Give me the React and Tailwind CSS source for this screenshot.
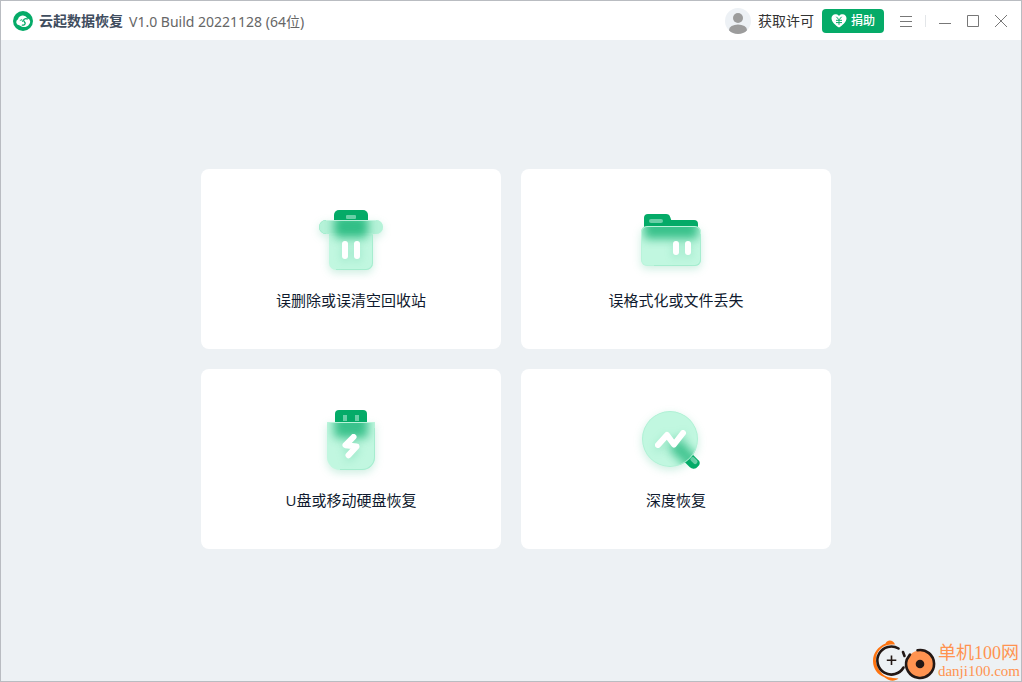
import React from 'react'

function LogoIcon() {
  return (
    <svg className="h-5 w-5 flex-shrink-0" viewBox="0 0 20 20" aria-hidden="true">
      <circle cx="10" cy="10" r="10" fill="#05ab68" />
      <path
        d="M6.200 14.200A3.100 3.100 0 0 1 5 8.300 5 5 0 0 1 14.300 7.200a3.900 3.900 0 0 1 1.200 7c-1.500 1.700-4.600 2.400-7 1.200-1-.4-1.700-.8-2.300-1.200z"
        fill="#fff"
      />
      <path
        d="M14.800 8.200c-2-1-4-.4-4.200 1-.2 1.200 1.400 1.700 1.600 3 .2 1.500-1.700 2.300-3.400 1.900"
        fill="none"
        stroke="#05ab68"
        strokeWidth="1.300"
      />
      <path d="M6.800 9.600 9 8.600l.6 2.400" fill="none" stroke="#05ab68" strokeWidth=".8" />
    </svg>
  )
}

function AvatarIcon() {
  return (
    <svg className="h-[26px] w-[26px] flex-shrink-0" viewBox="0 0 26 26" aria-hidden="true">
      <clipPath id="avatar-clip">
        <circle cx="13" cy="13" r="13" />
      </clipPath>
      <g clipPath="url(#avatar-clip)">
        <rect width="26" height="26" fill="#edf1f5" />
        <circle cx="13" cy="10" r="5" fill="#9c9c9c" />
        <ellipse cx="13" cy="22" rx="9" ry="5.500" fill="#9c9c9c" />
      </g>
    </svg>
  )
}

function HeartYenIcon() {
  return (
    <svg className="h-[14px] w-4" viewBox="0 0 16 14" aria-hidden="true">
      <path
        d="M8 1.900C6.900.6 5.600.3 4.400.3 2.200.3.500 2 .500 4.300.500 8 4.500 11.400 8 13.600c3.500-2.200 7.500-5.600 7.500-9.300 0-2.300-1.700-4-3.900-4-1.200 0-2.500.3-3.600 1.600z"
        fill="#fff"
      />
      <path d="m5.400 2.800 2.600 3 2.600-3M8 5.800v5M5 6.300h6M5 8.600h6" fill="none" stroke="#05ab68" strokeWidth="1" />
    </svg>
  )
}

// Soft drop shadow below every glass icon
const SHADOW = 'drop-shadow(0 3px 4px rgba(5, 171, 104, 0.2))'

function TrashIcon() {
  const body = 'M20 20h50a7 7 0 0 1 0 14h-3v29a7 7 0 0 1-7 7H30a7 7 0 0 1-7-7V34h-3a7 7 0 0 1 0-14z'
  return (
    <svg className="h-20 w-[90px]" viewBox="0 0 90 80" aria-hidden="true">
      <defs>
        <clipPath id="trash-clip">
          <path d={body} />
        </clipPath>
        <filter id="trash-blur" x="-60%" y="-60%" width="220%" height="220%">
          <feGaussianBlur stdDeviation="5" />
        </filter>
      </defs>
      <path d="M28 22v-7a5 5 0 0 1 5-5h24a5 5 0 0 1 5 5v7z" fill="#05ab68" />
      <rect x="40" y="15" width="10" height="4" rx="1" fill="#6bd0a8" />
      <path d={body} fill="#c1f7e0" style={{ filter: SHADOW }} />
      <g clipPath="url(#trash-clip)">
        <path d="M13 20h64v14H13z" fill="#b5f2d8" />
        <path d="M23 33h44v3H23z" fill="#bdf5dd" />
        <rect x="28" y="15" width="34" height="23" rx="5" fill="#05ab68" opacity=".72" filter="url(#trash-blur)" />
        <path d="M20 20.500h50" stroke="#c9f6e3" opacity=".85" />
        <path d="M67 35v28a7 7 0 0 1-7 7H30" fill="none" stroke="#a6edcf" strokeWidth="2" />
        <path d="M20 20a7 7 0 0 0 0 14" fill="none" stroke="#98e8c7" strokeWidth="1" />
      </g>
      <g style={{ filter: SHADOW }} fill="#fff">
        <rect x="36" y="41" width="6" height="18" rx="3" />
        <rect x="48" y="41" width="6" height="18" rx="3" />
      </g>
    </svg>
  )
}

function FolderIcon() {
  return (
    <svg className="h-20 w-[100px]" viewBox="0 0 100 80" aria-hidden="true">
      <defs>
        <clipPath id="folder-clip">
          <rect x="15" y="26" width="60" height="40" rx="6" />
        </clipPath>
        <filter id="folder-blur" x="-50%" y="-100%" width="200%" height="300%">
          <feGaussianBlur stdDeviation="5" />
        </filter>
      </defs>
      <path d="M18 30V18a4 4 0 0 1 4-4h18c2.500 0 3.600 1 4.200 3l1 3H68a4 4 0 0 1 4 4v6z" fill="#05ab68" />
      <rect x="23" y="19" width="14" height="4" rx="2" fill="#6bd0a8" />
      <rect x="15" y="26" width="60" height="40" rx="6" fill="#c1f7e0" style={{ filter: SHADOW }} />
      <g clipPath="url(#folder-clip)">
        <rect x="18" y="16" width="54" height="23" rx="4" fill="#05ab68" opacity=".7" filter="url(#folder-blur)" />
        <rect x="15.500" y="26.500" width="59" height="39" rx="5.500" fill="none" stroke="#b9f3da" />
        <path d="M75 34v26a6 6 0 0 1-6 6H28" fill="none" stroke="#a6edcf" strokeWidth="2" />
      </g>
      <g style={{ filter: SHADOW }} fill="#fff">
        <rect x="47" y="41" width="6" height="14" rx="3" />
        <rect x="59" y="41" width="6" height="14" rx="3" />
      </g>
    </svg>
  )
}

function UsbIcon() {
  const body = 'M22 22h46a1 1 0 0 1 1 1v34a13 13 0 0 1-13 13H34a13 13 0 0 1-13-13V23a1 1 0 0 1 1-1z'
  return (
    <svg className="h-20 w-[90px]" viewBox="0 0 90 80" aria-hidden="true">
      <defs>
        <clipPath id="usb-clip">
          <path d={body} />
        </clipPath>
        <filter id="usb-blur" x="-60%" y="-60%" width="220%" height="220%">
          <feGaussianBlur stdDeviation="5" />
        </filter>
      </defs>
      <path d="M29 24V14a4 4 0 0 1 4-4h24a4 4 0 0 1 4 4v10z" fill="#05ab68" />
      <path d="M37 15h4v6h-4zM49 15h4v6h-4z" fill="#6bd0a8" />
      <path d={body} fill="#c1f7e0" style={{ filter: SHADOW }} />
      <g clipPath="url(#usb-clip)">
        <rect x="28" y="14" width="34" height="24" rx="4" fill="#05ab68" opacity=".7" filter="url(#usb-blur)" />
        <path d="M21 22.500h48" stroke="#b9f3da" />
        <path d="M69 28v29a13 13 0 0 1-13 13H34" fill="none" stroke="#a6edcf" strokeWidth="2" />
      </g>
      <path
        d="M47.500 37 39.500 45.200 50.500 46.500 42.500 55.300"
        fill="none"
        stroke="#fff"
        strokeWidth="6"
        strokeLinecap="round"
        strokeLinejoin="round"
        style={{ filter: SHADOW }}
      />
    </svg>
  )
}

function DeepScanIcon() {
  return (
    <svg className="h-20 w-[100px]" viewBox="0 0 100 80" aria-hidden="true">
      <defs>
        <clipPath id="scan-clip">
          <circle cx="44" cy="39" r="28" />
        </clipPath>
        <filter id="scan-blur" x="-50%" y="-150%" width="200%" height="400%">
          <feGaussianBlur stdDeviation="5" />
        </filter>
      </defs>
      <g transform="rotate(45 66 61)">
        <path d="M58 56h11a4 4 0 0 1 5 5 5.500 5.500 0 0 1-5 6H58z" fill="#05ab68" />
        <rect x="63" y="57" width="8" height="4.500" rx="2" fill="#6bd0a8" />
      </g>
      <circle cx="44" cy="39" r="28" fill="#c1f7e0" style={{ filter: SHADOW }} />
      <g clipPath="url(#scan-clip)">
        <rect
          x="44"
          y="48"
          width="36"
          height="15"
          fill="#05ab68"
          opacity=".65"
          transform="rotate(45 60 55)"
          filter="url(#scan-blur)"
        />
        <circle cx="44" cy="39" r="27.500" fill="none" stroke="#b1f0d5" />
      </g>
      <path
        d="m32 45 9-10 7 9.500L57 33"
        fill="none"
        stroke="#fff"
        strokeWidth="6"
        strokeLinecap="round"
        strokeLinejoin="round"
        style={{ filter: SHADOW }}
      />
    </svg>
  )
}

function WindowIcon({ d }) {
  return (
    <svg className="h-[14px] w-[14px]" viewBox="0 0 14 14" fill="none" stroke="#777" aria-hidden="true">
      <path d={d} />
    </svg>
  )
}

const WINDOW_BUTTONS = [
  { label: '最小化', d: 'M1 9.500h12' },
  { label: '最大化', d: 'M1.500 1.500h11v11h-11z' },
  { label: '关闭', d: 'm1 1 12 12M13 1 1 13' },
]

const MODES = [
  { label: '误删除或误清空回收站', Icon: TrashIcon },
  { label: '误格式化或文件丢失', Icon: FolderIcon },
  { label: 'U盘或移动硬盘恢复', Icon: UsbIcon },
  { label: '深度恢复', Icon: DeepScanIcon },
]

function TitleBar() {
  return (
    <header className="flex h-[39px] items-center bg-white pl-3 pr-[6px] pt-px">
      <LogoIcon />
      <h1 className="ml-[6px] text-sm font-bold text-[#3f4d5e]">云起数据恢复</h1>
      <span className="ml-[6px] pt-px font-['Noto_Sans','Noto_Sans_CJK_SC',sans-serif] text-sm text-[#666]">
        V1.0 Build 20221128 (64位)
      </span>

      <div className="ml-auto flex items-center">
        <button type="button" className="flex items-center gap-[7px] text-sm text-[#333]">
          <AvatarIcon />
          获取许可
        </button>
        <button
          type="button"
          className="ml-2 flex h-6 w-[62px] items-center justify-center gap-1 rounded bg-[#05ab68] text-xs font-medium text-white"
        >
          <HeartYenIcon />
          捐助
        </button>
        <button type="button" aria-label="菜单" className="ml-2 flex h-7 w-7 items-center justify-center">
          <WindowIcon d="M1 2.500h12M1 7.500h12M1 12.500h12" />
        </button>
        <div className="mx-[5px] h-3 w-px bg-[#e3e6e9]" />
        {WINDOW_BUTTONS.map(({ label, d }) => (
          <button key={label} type="button" aria-label={label} className="flex h-7 w-7 items-center justify-center">
            <WindowIcon d={d} />
          </button>
        ))}
      </div>
    </header>
  )
}

function SiteMark() {
  return (
    <a href="#" className="absolute bottom-0 right-0 flex items-center pr-px">
      <svg className="h-[45px] w-[68px]" viewBox="0 0 68 45" fill="none" aria-hidden="true">
        <path
          d="M25 8.500c-1.500-4-7-6-9.500-1C8 10.500 3 17 3 25c0 8 5 14 11 16 5 4 10 5 14.500 1.500-8-.5-13-1.500-16.500-5C4.500 30 4 20 9.500 14 13 9.500 19 8 25 8.500z"
          fill="#ff7410"
        />
        <path d="M28.500 12.500A14 14 0 1 0 33.500 31.500" stroke="#231815" strokeWidth="2.600" strokeLinecap="round" />
        <path d="M21.500 19.500v9.500M16.800 24.200h9.500" stroke="#231815" strokeWidth="1.600" />
        <path d="M33 16l1.500 4" stroke="#231815" strokeWidth="2.600" strokeLinecap="round" />
        <circle cx="50" cy="28" r="13.500" fill="#ff9350" />
        <path d="M47.500 14.200A14 14 0 1 1 36.800 23.500L40 18.500" stroke="#231815" strokeWidth="2.600" strokeLinecap="round" />
        <circle cx="50" cy="28" r="4.300" fill="#231815" />
      </svg>
      <span className="flex flex-col pt-1 font-['Liberation_Serif','Noto_Sans_CJK_SC',serif] text-[#ff9350]">
        <span className="text-lg leading-5">单机100网</span>
        <span className="text-[15px] leading-4">danji100.com</span>
      </span>
    </a>
  )
}

export default function App() {
  return (
    <div className="relative flex min-h-screen flex-col border border-[#b9bcc1] bg-[#edf1f4] font-['Open_Sans','Noto_Sans_CJK_SC',sans-serif]">
      <TitleBar />
      <main className="flex flex-1 items-center justify-center pb-[3px] pl-[10px]">
        <div className="grid w-full max-w-[630px] grid-cols-[30fr_31fr] gap-5">
          {MODES.map(({ label, Icon }) => (
            <button
              key={label}
              type="button"
              className="flex h-[180px] flex-col items-center rounded-lg bg-white pt-[31px]"
            >
              <Icon />
              <span className="mt-2 text-[15px] leading-6 text-[#0f1a2e]">{label}</span>
            </button>
          ))}
        </div>
      </main>
      <SiteMark />
    </div>
  )
}
